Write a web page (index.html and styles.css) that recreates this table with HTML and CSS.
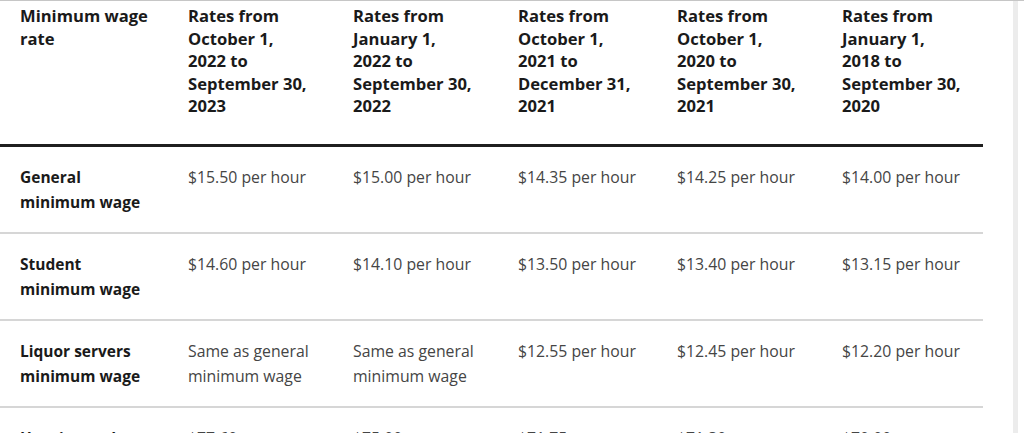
FILE: index.html
```html
<!DOCTYPE html>
<html lang="en">
<head>
<meta charset="utf-8">
<title>Minimum wage rates</title>
<link rel="stylesheet" href="styles.css">
</head>
<body>
<div class="page">
  <div class="content">
    <table class="wage-table">
      <colgroup>
        <col class="c1"><col class="c2"><col class="c3"><col class="c4"><col class="c5"><col class="c6">
      </colgroup>
      <thead>
        <tr>
          <th>Minimum wage<br>rate</th>
          <th>Rates from<br>October 1,<br>2022 to<br>September 30,<br>2023</th>
          <th>Rates from<br>January 1,<br>2022 to<br>September 30,<br>2022</th>
          <th>Rates from<br>October 1,<br>2021 to<br>December 31,<br>2021</th>
          <th>Rates from<br>October 1,<br>2020 to<br>September 30,<br>2021</th>
          <th>Rates from<br>January 1,<br>2018 to<br>September 30,<br>2020</th>
        </tr>
      </thead>
      <tbody>
        <tr>
          <th class="row-label">General<br>minimum wage</th>
          <td>$15.50 per hour</td>
          <td>$15.00 per hour</td>
          <td>$14.35 per hour</td>
          <td>$14.25 per hour</td>
          <td>$14.00 per hour</td>
        </tr>
        <tr>
          <th class="row-label">Student<br>minimum wage</th>
          <td>$14.60 per hour</td>
          <td>$14.10 per hour</td>
          <td>$13.50 per hour</td>
          <td>$13.40 per hour</td>
          <td>$13.15 per hour</td>
        </tr>
        <tr>
          <th class="row-label">Liquor servers<br>minimum wage</th>
          <td>Same as general<br>minimum wage</td>
          <td>Same as general<br>minimum wage</td>
          <td>$12.55 per hour</td>
          <td>$12.45 per hour</td>
          <td>$12.20 per hour</td>
        </tr>
        <tr>
          <th class="row-label">Hunting and<br>fishing guides<br>minimum wage</th>
          <td>$77.60<br>for less than five consecutive hours in a day</td>
          <td>$75.00<br>for less than five consecutive hours in a day</td>
          <td>$71.75<br>for less than five consecutive hours in a day</td>
          <td>$71.30<br>for less than five consecutive hours in a day</td>
          <td>$70.00<br>for less than five consecutive hours in a day</td>
        </tr>
      </tbody>
    </table>
  </div>
  <div class="scroll-track"></div>
</div>
</body>
</html>
```

FILE: styles.css
```css
html, body {
  margin: 0;
  padding: 0;
  background: #ffffff;
}

body {
  font-family: "Open Sans", "Liberation Sans", sans-serif;
  color: #1a1a1a;
}

.page {
  display: flex;
  height: 432px;
  overflow: hidden;
  border-top: 1px solid #c6c6c6;
}

.content {
  width: 1013px;
  flex: none;
}

.scroll-track {
  width: 5px;
  flex: none;
  background: #ececec;
}

.wage-table {
  width: 983px;
  table-layout: fixed;
  border-collapse: collapse;
  border-spacing: 0;
}

.c1 { width: 168px; }
.c2 { width: 165px; }
.c3 { width: 165px; }
.c4 { width: 159px; }
.c5 { width: 165px; }
.c6 { width: 161px; }

.wage-table thead th {
  text-align: left;
  vertical-align: top;
  font-size: 16.6px;
  font-weight: 700;
  line-height: 22.5px;
  color: #1a1a1a;
  padding: 4px 8px 26.5px 20px;
  border-bottom: 3px solid #1f1f1f;
}

.wage-table tbody th,
.wage-table tbody td {
  text-align: left;
  vertical-align: top;
  line-height: 25px;
  padding: 18px 8px 17px 20px;
  border-bottom: 2px solid #d6d6d6;
}

.wage-table tbody th.row-label {
  font-size: 15.5px;
  font-weight: 700;
  color: #1a1a1a;
}

.wage-table tbody td {
  font-size: 15.8px;
  font-weight: 400;
  color: #454545;
}
```
